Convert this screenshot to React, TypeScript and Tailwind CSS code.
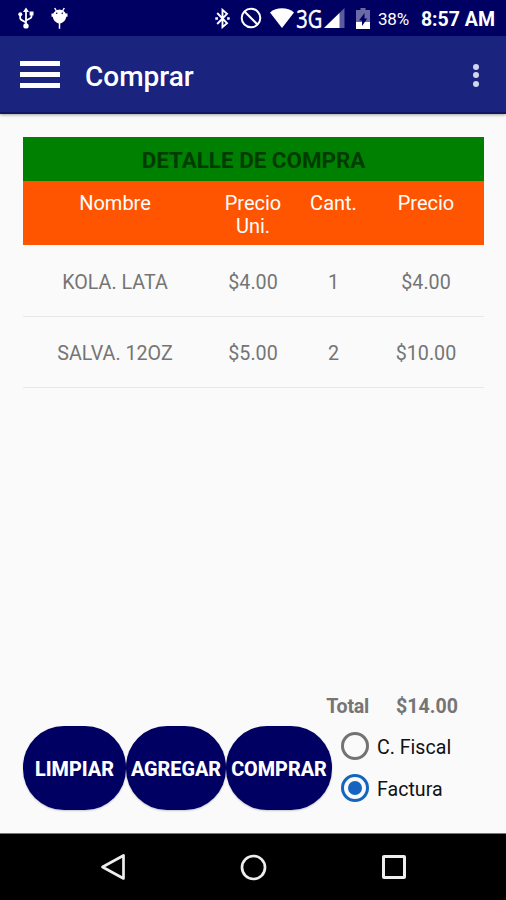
import { useState } from 'react'
import clsx from 'clsx'

const items = [
  { name: 'KOLA. LATA', price: '$4.00', qty: '1', total: '$4.00' },
  { name: 'SALVA. 12OZ', price: '$5.00', qty: '2', total: '$10.00' },
]

const columns = 'grid grid-cols-[184px_92px_69px_116px] text-center'

function UsbIcon() {
  return (
    <svg className="h-[22px] w-4" viewBox="0 0 16 22" fill="none" stroke="#fff" strokeWidth="1.8">
      <path d="M8 4v13M8 15.500l-4.700-2.600c-.7-.4-1.100-1-1.100-1.800V8M8 13.500l4.300-2.200c.8-.4 1.200-.9 1.200-1.700V7" />
      <path d="M8 .4l3 4.600H5z" fill="#fff" stroke="none" />
      <circle cx="2.300" cy="7.300" r="2" fill="#fff" stroke="none" />
      <path d="M11.600 4.500h3.900v3.900h-3.900z" fill="#fff" stroke="none" />
      <circle cx="8" cy="18.900" r="2.700" fill="#fff" stroke="none" />
    </svg>
  )
}

function DebugIcon() {
  return (
    <svg className="h-[22px] w-[17px]" viewBox="0 0 17 22" fill="none">
      <path d="M3.700 1l1.700 3M13.300 1l-1.700 3M8.500 15v6.800" stroke="#fff" strokeWidth="1.500" />
      <path
        d="M3 5.200Q5.400 2.500 8.500 2.500t5.500 2.700l.6 1.300h1.900v3.300h-1.200q-.9 5.900-6.800 6.900-5.900-1-6.800-6.900H.5V6.500h1.900z"
        fill="#fff"
      />
      <circle cx="5.700" cy="6.300" r=".8" fill="#000063" />
      <circle cx="11.300" cy="6.300" r=".8" fill="#000063" />
    </svg>
  )
}

function BluetoothIcon() {
  return (
    <svg className="h-[21px] w-[15px]" viewBox="0 0 15 21" fill="none" stroke="#fff" strokeWidth="1.900">
      <path d="M2.200 5l9.800 10.200-4.500 3.900V1.900L12 5.800 2.200 16" />
      <path d="M.3 9.200h2.600v2.600H.3zM12.100 9.200h2.600v2.600h-2.600z" fill="#fff" stroke="none" />
    </svg>
  )
}

function StatusBar() {
  return (
    <div className="flex h-9 items-center bg-[#000063] pr-[11px] pl-[18px] text-white">
      <UsbIcon />
      <span className="ml-[17px] flex">
        <DebugIcon />
      </span>
      <span className="ml-auto flex">
        <BluetoothIcon />
      </span>
      <svg className="ml-2.5 size-[22px]" viewBox="0 0 22 22" fill="none" stroke="#fff" strokeWidth="2">
        <circle cx="11" cy="11" r="9.300" />
        <path d="M4.500 4.500l13 13" />
      </svg>
      <svg className="ml-2 h-5 w-6" viewBox="0 0 24 20" fill="#fff">
        <path d="M12 20L0 4.500Q5 .3 12 .3t12 4.200z" />
      </svg>
      <span className="ml-0.5 flex w-[26px] justify-center">
        <span className="scale-x-[0.8] font-['Open_Sans',sans-serif] text-[25px] leading-9 font-medium [-webkit-text-stroke:0.5px_#fff]">
          3G
        </span>
      </span>
      <svg className="ml-0.5 h-5 w-[21px]" viewBox="0 0 21 20">
        <path d="M20.500 0v20H0z" fill="#5a5a9c" />
        <path d="M15.500 5v15H0z" fill="#fff" />
      </svg>
      <svg className="ml-[11px] h-[21px] w-3.5" viewBox="0 0 14 21">
        <path d="M4.500 0h5v2H14v19H0V2h4.500z" fill="#6a6aa6" />
        <path d="M0 14h14v7H0z" fill="#fff" />
        <path d="M8.500 5v5.500h2.800L6 18v-5.500H3z" fill="#000063" />
      </svg>
      <span className="ml-2 pt-0.5 text-[17px] leading-9 tracking-[-0.2px]">38%</span>
      <span className="ml-3 pt-[3px] text-[19.5px] leading-9 font-bold">8:57 AM</span>
    </div>
  )
}

function AppBar() {
  return (
    <header className="flex h-[78px] items-center border-b-2 border-[#10175f] bg-[#1a237e] pr-[27px] pl-5 shadow-[0_1px_3px_rgba(0,0,0,0.35)]">
      <button type="button" aria-label="Menú" className="flex w-10 flex-col gap-1.5">
        <span className="h-[5px] bg-white" />
        <span className="h-[5px] bg-white" />
        <span className="h-[5px] bg-white" />
      </button>
      <h1 className="ml-[25px] pt-[5px] text-[28px] font-medium text-white">Comprar</h1>
      <button type="button" aria-label="Más opciones" className="ml-auto flex flex-col gap-[2.5px] pt-0.5">
        <span className="size-1.5 rounded-full bg-[#d3d5ec]" />
        <span className="size-1.5 rounded-full bg-[#d3d5ec]" />
        <span className="size-1.5 rounded-full bg-[#d3d5ec]" />
      </button>
    </header>
  )
}

function ActionButton({ label, className }: { label: string; className: string }) {
  return (
    <button
      type="button"
      className={clsx(
        'h-[84px] rounded-[41px] bg-[#000063] pt-[3px] text-center text-[19.8px] font-extrabold whitespace-nowrap text-white shadow-[0_1px_2px_rgba(0,0,0,0.2)]',
        className,
      )}
    >
      {label}
    </button>
  )
}

function Radio({ label, checked, onSelect }: { label: string; checked: boolean; onSelect: () => void }) {
  return (
    <button type="button" role="radio" aria-checked={checked} onClick={onSelect} className="flex h-[42px] items-center">
      <span
        className={clsx(
          'flex size-7 items-center justify-center rounded-full border-[3px]',
          checked ? 'border-[#1565c0]' : 'border-[#737373]',
        )}
      >
        {checked && <span className="size-3.5 rounded-full bg-[#1565c0]" />}
      </span>
      <span className="ml-2 pt-1 text-[19.6px] text-[#111]">{label}</span>
    </button>
  )
}

function NavBar() {
  return (
    <nav className="flex h-[67px] items-center border-t border-[#777] bg-black pl-[100px]">
      <svg className="h-7 w-[26px]" viewBox="0 0 26 28" fill="none" stroke="#eee" strokeWidth="2.700">
        <path d="M23.500 2.500v23L2.500 14z" strokeLinejoin="round" />
      </svg>
      <svg className="ml-[114px] size-[27px]" viewBox="0 0 27 27" fill="none" stroke="#eee" strokeWidth="2.700">
        <circle cx="13.500" cy="13.500" r="11.500" />
      </svg>
      <span className="ml-[115px] size-6 rounded-[2px] border-[3px] border-[#eee]" />
    </nav>
  )
}

export default function App() {
  const [docType, setDocType] = useState('factura')

  return (
    <div className="flex h-[900px] w-[506px] flex-col bg-[#fafafa] font-[Roboto,sans-serif]">
      <StatusBar />
      <AppBar />

      <main className="flex flex-1 flex-col pr-[22px] pb-[23px] pl-[23px]">
        <h2 className="mt-[23px] h-11 bg-[#008000] text-center text-[22.4px] leading-[47px] font-bold text-[#003b00]">
          DETALLE DE COMPRA
        </h2>
        <div className={clsx(columns, 'h-16 bg-[#ff5500] pt-[11px] text-[20px] leading-[23px] text-white')}>
          <span>Nombre</span>
          <span className="px-4">Precio Uni.</span>
          <span>Cant.</span>
          <span>Precio</span>
        </div>
        {items.map((item, i) => (
          <div
            key={item.name}
            className={clsx(
              columns,
              'border-b border-[#e8e8e8] text-[19.7px] text-[#757575]',
              i === 0 ? 'h-[72px] leading-[75px]' : 'h-[71px] leading-[74px]',
            )}
          >
            <span>{item.name}</span>
            <span>{item.price}</span>
            <span>{item.qty}</span>
            <span>{item.total}</span>
          </div>
        ))}

        <div className="mt-auto flex justify-end pr-[26px] text-[19.6px] leading-6 font-bold text-[#757575]">
          <span className="tracking-[-0.2px]">Total</span>
          <span className="ml-[27px]">$14.00</span>
        </div>
        <div className="mt-[7px] flex h-[84px]">
          <ActionButton label="LIMPIAR" className="w-[103px]" />
          <ActionButton label="AGREGAR" className="w-[100px]" />
          <ActionButton label="COMPRAR" className="w-[106px]" />
          <div role="radiogroup" className="-mt-px ml-[9px] flex flex-col">
            <Radio label="C. Fiscal" checked={docType === 'fiscal'} onSelect={() => setDocType('fiscal')} />
            <Radio label="Factura" checked={docType === 'factura'} onSelect={() => setDocType('factura')} />
          </div>
        </div>
      </main>

      <NavBar />
    </div>
  )
}
